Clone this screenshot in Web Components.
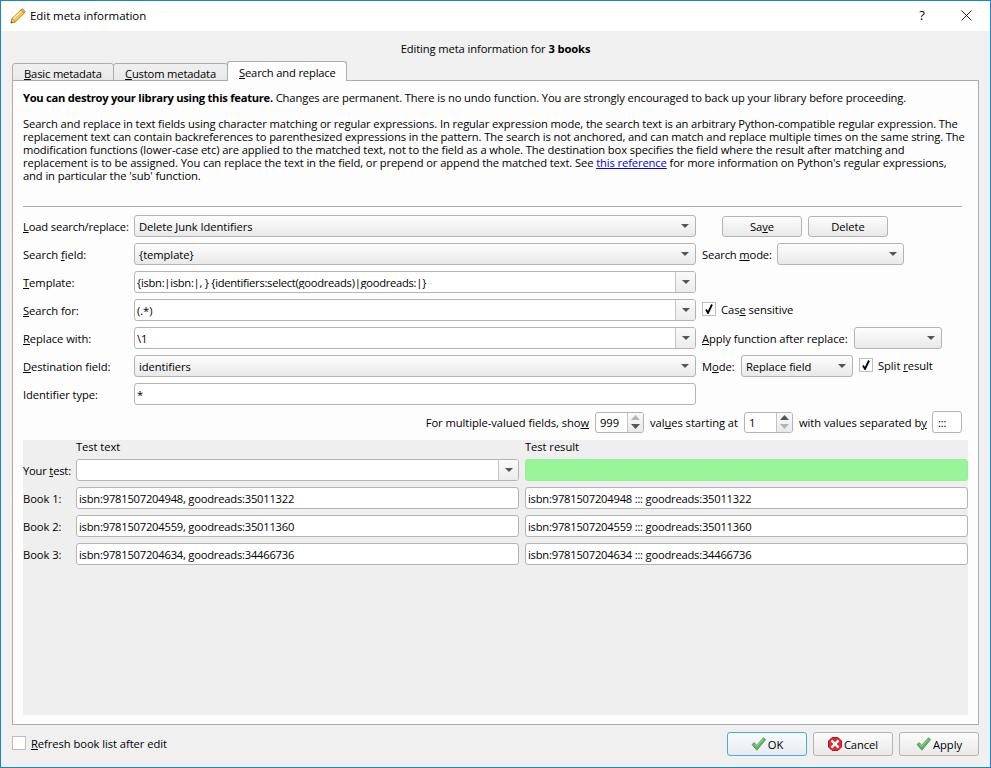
<!DOCTYPE html>
<html lang="en"><head><meta charset="utf-8"><title>Edit meta information</title>
<style>
html,body{margin:0;padding:0;background:#f0f0f0}
body{font:11.2px/13px "Open Sans","Noto Sans",sans-serif;letter-spacing:-.06px;color:#000;width:991px;height:768px;overflow:hidden}
u{text-underline-offset:1px}
</style></head><body>
<x-dialog>
  <span slot="title">Edit meta information</span>
  <x-heading>Editing meta information for <b>3 books</b></x-heading>
  <x-tabs>
    <x-tab style="width:102px"><u>B</u>asic metadata</x-tab>
    <x-tab style="width:115px"><u>C</u>ustom metadata</x-tab>
    <x-tab selected style="width:120px"><u>S</u>earch and replace</x-tab>
  </x-tabs>
  <x-pane>
    <x-help>
      <div><b style="letter-spacing:-.27px">You can destroy your library using this feature.</b> Changes are permanent. There is no undo function. You are strongly encouraged to back up your library before proceeding.</div>
      <div>&nbsp;</div>
      <div>Search and replace in text fields using character matching or regular expressions. In regular expression mode, the search text is an arbitrary Python-compatible regular expression. The</div>
      <div>replacement text can contain backreferences to parenthesized expressions in the pattern. The search is not anchored, and can match and replace multiple times on the same string. The</div>
      <div>modification functions (lower-case etc) are applied to the matched text, not to the field as a whole. The destination box specifies the field where the result after matching and</div>
      <div>replacement is to be assigned. You can replace the text in the field, or prepend or append the matched text. See <a href="#" style="color:#0000ee">this reference</a> for more information on Python's regular expressions,</div>
      <div>and in particular the 'sub' function.</div>
    </x-help>
    <x-form>
      <x-label style="letter-spacing:-.14px"><u>L</u>oad search/replace:</x-label>
      <x-combo>Delete Junk Identifiers</x-combo>
      <x-cell style="padding-left:20px"><x-button w="80"><span>Sa<u>v</u>e</span></x-button><x-button w="80">Delete</x-button></x-cell>

      <x-label>Search <u>f</u>ield:</x-label>
      <x-combo>{template}</x-combo>
      <x-cell><x-label style="width:69px;letter-spacing:-.14px">Search <u>m</u>ode:</x-label><x-combo style="width:127px"></x-combo></x-cell>

      <x-label><u>T</u>emplate:</x-label>
      <x-combo editable style="letter-spacing:-.28px">{isbn:|isbn:|, } {identifiers:select(goodreads)|goodreads:|}</x-combo>
      <x-cell></x-cell>

      <x-label><u>S</u>earch for:</x-label>
      <x-combo editable>(.*)</x-combo>
      <x-cell><x-check checked>Cas<u>e</u> sensitive</x-check></x-cell>

      <x-label><u>R</u>eplace with:</x-label>
      <x-combo editable>\1</x-combo>
      <x-cell><x-label style="width:146px"><u>A</u>pply function after replace:</x-label><x-combo style="width:88px"></x-combo></x-cell>

      <x-label><u>D</u>estination field:</x-label>
      <x-combo>identifiers</x-combo>
      <x-cell><x-label style="width:33px">M<u>o</u>de:</x-label><x-combo style="width:112px">Replace field</x-combo><x-check checked>Split <u>r</u>esult</x-check></x-cell>

      <x-label>Identifier type:</x-label>
      <x-field>*</x-field>
      <x-cell></x-cell>
    </x-form>
    <x-options>
      <x-label>For multiple-valued fields, sho<u>w</u></x-label>
      <x-spin top-off>999</x-spin>
      <x-label style="width:88px">val<u>u</u>es starting at</x-label>
      <x-spin bottom-off>1</x-spin>
      <x-label style="width:127px">with values separated b<u>y</u></x-label>
      <x-field style="width:30px;height:22px;padding-left:5px;box-sizing:border-box">:::</x-field>
    </x-options>
    <x-test>
      <span></span><x-label>Test text</x-label><x-label>Test result</x-label>
      <x-label style="letter-spacing:-.2px">Your <u>t</u>est:</x-label><x-combo editable></x-combo><x-field green></x-field>
      <x-label>Book 1:</x-label><x-field>isbn:9781507204948, goodreads:35011322</x-field><x-field>isbn:9781507204948 ::: goodreads:35011322</x-field>
      <x-label>Book 2:</x-label><x-field>isbn:9781507204559, goodreads:35011360</x-field><x-field>isbn:9781507204559 ::: goodreads:35011360</x-field>
      <x-label>Book 3:</x-label><x-field>isbn:9781507204634, goodreads:34466736</x-field><x-field>isbn:9781507204634 ::: goodreads:34466736</x-field>
    </x-test>
  </x-pane>
  <x-footer>
    <x-check large><u>R</u>efresh book list after edit</x-check>
    <x-spacer></x-spacer>
    <x-button w="80" h="24" focus icon="check">OK</x-button>
    <x-button w="80" h="24" icon="cancel">Cancel</x-button>
    <x-button w="80" h="24" icon="check">Apply</x-button>
  </x-footer>
</x-dialog>
<script>
function def(name, css, html, init){
  customElements.define(name, class extends HTMLElement{
    constructor(){super();const r=this.attachShadow({mode:'open'});r.innerHTML='<style>'+css+'</style>'+html;}
    connectedCallback(){ if(init) init(this); }
  });
}
const ARROW='<svg width="8" height="4" viewBox="0 0 8 4"><path d="M0 0h8L4 4z" fill="#555"/></svg>';
const CHECK='<svg width="15" height="14" viewBox="0 0 15 14"><path d="M1 7.500 3.200 5.600 5.700 8.300 12.400 .8 14.600 2.600 5.900 13.200z" fill="#5fb35f" stroke="#4d8f5b" stroke-width=".8" stroke-linejoin="round"/><path d="M3.200 6.600 5.700 9.300 12.500 2" fill="none" stroke="#9fdc9a" stroke-width="1"/></svg>';
const CANCEL='<svg width="14" height="14" viewBox="0 0 14 14"><path d="M4 .5h6L13.500 4v6L10 13.500H4L.5 10V4z" fill="#e2262b" stroke="#b81a1f"/><path d="M4.300 4.300l5.400 5.400M9.700 4.300l-5.400 5.400" stroke="#fff" stroke-width="2.400" stroke-linecap="square"/></svg>';

def('x-dialog',`
:host{display:flex;flex-direction:column;box-sizing:border-box;width:991px;height:768px;border:1px solid #1883d7;background:#f0f0f0}
.bar{display:flex;align-items:center;height:30px;background:#fff;padding-left:9px;flex:none}
.bar svg.pen{margin-right:4px;margin-bottom:1px}
.t{flex:1;font-size:11.5px;padding-bottom:1px}
.help{width:12px;text-align:center;margin-right:33px;font-size:13px;padding-bottom:2px}
.x{margin-right:18px;display:block;margin-bottom:1px}
.body{flex:1;display:flex;flex-direction:column;padding:0 11px;min-height:0}`,
`<div class="bar">
<svg class="pen" width="16" height="16" viewBox="0 0 16 16"><path d="M1 15 2 10.500 11 1.800 14.300 5 5.500 13.800z" fill="#f5c94e" stroke="#a97a2c" stroke-width=".9" stroke-linejoin="round"/><path d="M3.200 10.600 12 2.600" stroke="#fdeea8" stroke-width="1.200"/><path d="M11 1.800 12.500 .6 15.400 3.600 14.300 5z" fill="#e8b9a0" stroke="#a97a2c" stroke-width=".8" stroke-linejoin="round"/><path d="M1 15 2 10.500 5.500 13.800z" fill="#eecb9c" stroke="#a97a2c" stroke-width=".7" stroke-linejoin="round"/><path d="M1 15l.4-1.800 1.400 1.300z" fill="#5a4020"/></svg>
<span class="t"><slot name="title"></slot></span>
<span class="help">?</span>
<svg class="x" width="11" height="11" viewBox="0 0 11 11"><path d="M.5.5l10 10M10.500.5l-10 10" stroke="#222" stroke-width="1" fill="none"/></svg>
</div><div class="body"><slot></slot></div>`);

def('x-heading',`:host{display:block;text-align:center;height:30px;line-height:16px;padding-top:10px;box-sizing:border-box;flex:none;letter-spacing:-.11px}`,`<slot></slot>`);

def('x-tabs',`:host{display:flex;align-items:flex-end;height:20px;margin-bottom:-1px;position:relative;z-index:1;flex:none;letter-spacing:-.16px}`,`<slot></slot>`);
def('x-tab',`
:host{display:block;box-sizing:border-box;height:18px;padding:3px 0 0 11px;white-space:nowrap;border:1px solid #acacac;border-radius:3px 3px 0 0;background:linear-gradient(#f0f0f0,#e9e9e9);line-height:13px;margin-right:-1px}
:host([selected]){height:20px;padding-top:4px;background:#fdfdfd;border-bottom:0;position:relative;z-index:1}`,`<slot></slot>`);

def('x-pane',`:host{display:flex;flex-direction:column;flex:none;box-sizing:border-box;height:645px;border:1px solid #acacac;background:#fdfdfd;padding:10px 10px 9px 10px;min-height:0}`,`<slot></slot>`);

def('x-help',`:host{display:block;white-space:nowrap;height:116px;box-sizing:border-box;border-bottom:1px solid #a9a9a9;margin-right:6px;flex:none;letter-spacing:-.11px}`,`<slot></slot>`);

def('x-form',`:host{display:grid;grid-template-columns:105px 562px 1fr;column-gap:6px;grid-auto-rows:22px;row-gap:6px;margin:8px 6px 0 0;flex:none}`,`<slot></slot>`);
def('x-cell',`:host{display:flex;align-items:center;gap:6px;min-width:0}`,`<slot></slot>`);
def('x-label',`:host{display:flex;align-items:center;white-space:nowrap;flex:none}`,`<span><slot></slot></span>`);

def('x-combo',`
:host{display:flex;align-items:center;box-sizing:border-box;height:22px;border:1px solid #b4b4b4;border-radius:3px;background:linear-gradient(#fdfdfd,#e9e9e9);white-space:nowrap;flex:none}
.v{flex:1;padding-left:4px;min-width:0;overflow:hidden}
.a{width:20px;height:100%;display:flex;align-items:center;justify-content:center;flex:none}
:host([editable]) {background:#fff}
:host([editable]) .v{padding-left:2px}
:host([editable]) .a{border-left:1px solid #c4c4c4;background:linear-gradient(#fafafa,#ececec);box-sizing:border-box;border-radius:0 2px 2px 0}`,
`<span class="v"><slot></slot></span><span class="a">${ARROW}</span>`);

def('x-field',`
:host{display:flex;align-items:center;box-sizing:border-box;height:22px;border:1px solid #b4b4b4;border-radius:3px;background:#fff;padding-left:2px;white-space:nowrap;flex:none;letter-spacing:-.22px}
:host([green]){background:#9af59a;border-color:#98ee98}`,`<slot></slot>`);

def('x-check',`
:host{display:flex;align-items:center;gap:5px;white-space:nowrap;flex:none;padding-bottom:2px}
.b{width:14px;height:14px;box-sizing:border-box;border:1px solid #bdbdbd;background:#fff;display:flex;align-items:center;justify-content:center;flex:none}
.b svg{display:none}
:host([checked]) .b svg{display:block}`,
`<span class="b"><svg width="8" height="10" viewBox="0 0 8 10"><path d="M1 5.500 3 9 7 .5" fill="none" stroke="#000" stroke-width="1.800"/></svg></span><span><slot></slot></span>`);

def('x-button',`
:host{display:flex;align-items:center;justify-content:center;box-sizing:border-box;height:21px;border:1px solid #b4b4b4;border-radius:3px;background:linear-gradient(#fcfcfc,#e9e9e9);white-space:nowrap;flex:none;gap:2px}
:host([focus]){border-color:#4aa8ec;background:linear-gradient(#f8fbfd,#e6ebef)}
svg{display:block}`,`<span class="i"></span><span><slot></slot></span>`,
el=>{ el.style.width=el.getAttribute('w')+'px'; if(el.hasAttribute('h')) el.style.height=el.getAttribute('h')+'px';
  const ic=el.getAttribute('icon'), i=el.shadowRoot.querySelector('.i');
  if(ic) i.innerHTML= ic==='check'?CHECK:CANCEL; else i.remove(); });

def('x-spin',`
:host{display:flex;box-sizing:border-box;width:49px;height:21px;border:1px solid #b4b4b4;border-radius:3px;background:#fff;flex:none}
.v{flex:1;padding-left:4px;display:flex;align-items:center}
.s{width:15px;border-left:1px solid #c4c4c4;display:flex;flex-direction:column;background:linear-gradient(#fafafa,#e9e9e9);border-radius:0 2px 2px 0;flex:none}
.s span{flex:1;display:flex;align-items:center;justify-content:center}
svg{display:block}
:host([top-off]) .u path,:host([bottom-off]) .d path{fill:#b5b5b5}`,
`<span class="v"><slot></slot></span><span class="s"><span class="u"><svg width="9" height="5" viewBox="0 0 9 5"><path d="M4.500 0 9 5H0z" fill="#555"/></svg></span><span class="d"><svg width="9" height="5" viewBox="0 0 9 5"><path d="M0 0h9L4.500 5z" fill="#555"/></svg></span></span>`);

def('x-options',`:host{display:flex;justify-content:flex-end;align-items:center;gap:6px;height:22px;margin:6px 6px 0 0;flex:none}`,`<slot></slot>`);

def('x-test',`:host{display:grid;grid-template-columns:47px 443px 443px;column-gap:6px;grid-template-rows:13px;grid-auto-rows:22px;row-gap:6px;margin-top:7px;background:#efefef;flex:1;align-content:start}`,`<slot></slot>`);

def('x-footer',`:host{display:flex;align-items:flex-start;gap:6px;padding-top:7px;flex:none}
::slotted(x-check){margin-top:4px}`,`<slot></slot>`);
def('x-spacer',`:host{display:block;flex:1}`,``);
</script>
</body></html>
